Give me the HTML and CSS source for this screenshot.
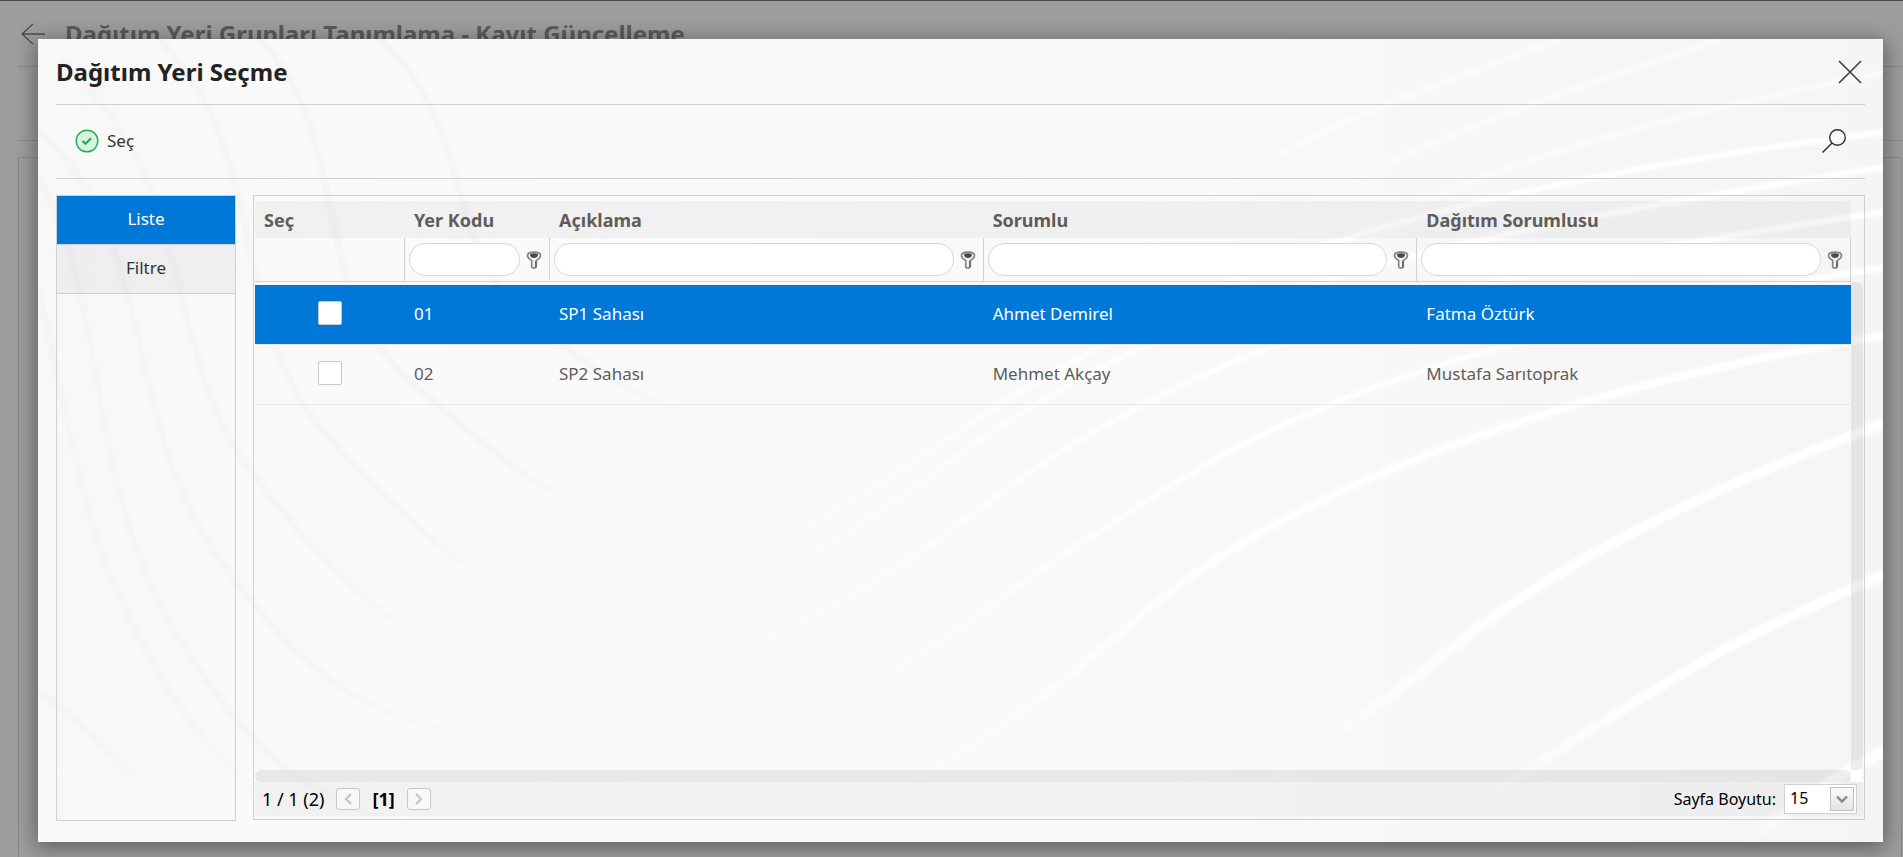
FILE: index.html
```html
<!DOCTYPE html>
<html lang="tr">
<head>
<meta charset="utf-8">
<title>Dağıtım Yeri Seçme</title>
<link rel="stylesheet" href="styles.css">
</head>
<body>
<svg class="defs" aria-hidden="true">
  <symbol id="pin" viewBox="0 0 16 18">
    <path d="M1.500 4.500C1.500 2 4 1.200 8 1.200s6.500.8 6.500 3.300c0 2.600-2.200 3.700-4.200 5v6q0 1.300-1.200 1.300H6.900q-1.200 0-1.200-1.300v-6C3.700 8.200 1.500 7.100 1.500 4.500z" fill="#f4f4f4" stroke="#858585" stroke-width="1.700"/>
    <path d="M4 3Q8 1.500 12 3q0 4-4 4T4 3z" fill="#4a4a4a"/>
    <path d="M9.800 10v6" stroke="#666" stroke-width="1.500"/>
  </symbol>
</svg>

<main class="page" inert>
  <header class="page-head">
    <svg class="back" viewBox="0 0 24 22"><path d="M12 1 1 11l11 10M1 11h23" fill="none" stroke="#4d4d4d" stroke-width="1.300"/></svg>
    <h1>Dağıtım Yeri Grupları Tanımlama - Kayıt Güncelleme</h1>
  </header>
  <div class="page-bar"></div>
  <div class="page-box"></div>
</main>

<section class="dialog" role="dialog" aria-labelledby="dlg-title">
  <svg class="waves" viewBox="38 39 1845 803" preserveAspectRatio="none" aria-hidden="true">
    <defs>
      <linearGradient id="base" x1="0" y1="0" x2="1" y2="0">
        <stop offset="0" stop-color="#f8f8f8"/><stop offset=".2" stop-color="#fafafa"/><stop offset=".6" stop-color="#f9f9f9"/><stop offset="1" stop-color="#f5f5f5"/>
      </linearGradient>
      <linearGradient id="light" x1="0" y1="0" x2="1" y2="0">
        <stop offset="0.100" stop-color="#fff" stop-opacity="0"/><stop offset=".5" stop-color="#fff"/><stop offset="1" stop-color="#fff"/>
      </linearGradient>
      <linearGradient id="shade" x1="0" y1="0" x2="1" y2="0">
        <stop offset="0" stop-color="#f4f4f4"/><stop offset=".5" stop-color="#f5f5f5"/><stop offset="1" stop-color="#f8f8f8" stop-opacity="0"/>
      </linearGradient>
      <filter id="soft"><feGaussianBlur stdDeviation="1.500"/></filter>
    </defs>
    <rect x="38" y="39" width="1845" height="803" fill="url(#base)"/>
    <g fill="none" stroke="url(#shade)" stroke-width="7" filter="url(#soft)">
      <path d="M38 290C70 420 80 520 130 620S220 770 330 850"/>
      <path d="M38 180C110 290 80 480 180 640S330 800 480 850"/>
      <path d="M38 130C160 240 120 420 220 560S400 740 560 740"/>
      <path d="M60 60C200 180 160 350 250 470S420 660 560 690"/>
      <path d="M160 39C280 170 220 330 340 450S480 600 620 590"/>
      <path d="M260 39C360 150 300 290 420 390S560 520 700 500"/>
      <path d="M380 39C480 130 440 260 540 330S680 430 790 420"/>
      <path d="M38 690C100 740 150 780 180 850"/>
    </g>
    <g fill="none" stroke="url(#light)" stroke-width="6" filter="url(#soft)">
      <path d="M560 600C820 560 900 460 1040 380S1330 200 1900 130"/>
      <path d="M560 640C830 590 900 480 1060 390S1400 240 1900 165"/>
      <path d="M540 697C850 650 930 530 1080 440S1400 280 1900 210"/>
      <path d="M631 776C870 720 960 620 1092 536S1350 350 1900 265"/>
      <path d="M700 860C960 790 1060 680 1160 600S1480 400 1900 333" stroke-width="8"/>
      <path d="M1165 842C1250 800 1400 690 1456 645S1640 510 1900 418" stroke-width="10"/>
      <path d="M1400 860C1480 800 1600 720 1723 650Q1810 605 1900 568" stroke-width="10"/>
      <path d="M1720 860Q1810 790 1900 742" stroke-width="12"/>
      <path d="M1100 300C1200 160 1400 100 1560 39" stroke-opacity=".5"/>
      <path d="M1180 300C1280 190 1480 120 1720 39" stroke-opacity=".5"/>
      <path d="M1200 340C1340 220 1520 140 1900 70" stroke-opacity=".5"/>
    </g>
  </svg>

  <header class="dialog-head">
    <h2 id="dlg-title">Dağıtım Yeri Seçme</h2>
    <button class="icon-btn" type="button" aria-label="Kapat">
      <svg width="24" height="24" viewBox="0 0 24 24"><path d="M1 1l22 22M23 1 1 23" stroke="#444" stroke-width="1.700"/></svg>
    </button>
  </header>

  <div class="toolbar">
    <button class="tool" type="button">
      <svg width="24" height="24" viewBox="0 0 24 24"><circle cx="12" cy="12" r="10.800" fill="#daf1df" stroke="#23ad57" stroke-width="1.400"/><path d="M7.500 12l3 2.800 5.500-5.500" fill="none" stroke="#23ad57" stroke-width="2.200"/></svg>
      <span>Seç</span>
    </button>
    <button class="icon-btn" type="button" aria-label="Ara">
      <svg width="24" height="24" viewBox="0 0 24 24"><circle cx="15.500" cy="8.500" r="7.800" fill="none" stroke="#333" stroke-width="1.400"/><path d="M10 14 .5 23.500" stroke="#333" stroke-width="1.500"/></svg>
    </button>
  </div>

  <div class="content">
    <nav class="tabs">
      <button class="tab active" type="button">Liste</button>
      <button class="tab" type="button">Filtre</button>
    </nav>

    <div class="grid">
      <div class="viewport">
        <table>
          <colgroup><col class="c-sel"><col class="c-code"><col><col><col></colgroup>
          <thead>
            <tr class="titles"><th>Seç</th><th>Yer Kodu</th><th>Açıklama</th><th>Sorumlu</th><th>Dağıtım Sorumlusu</th></tr>
            <tr class="filters">
              <td></td>
              <td><div class="filter"><input type="text" aria-label="Yer Kodu"><button type="button" aria-label="Yer Kodu filtresi"><svg width="16" height="18"><use href="#pin"/></svg></button></div></td>
              <td><div class="filter"><input type="text" aria-label="Açıklama"><button type="button" aria-label="Açıklama filtresi"><svg width="16" height="18"><use href="#pin"/></svg></button></div></td>
              <td><div class="filter"><input type="text" aria-label="Sorumlu"><button type="button" aria-label="Sorumlu filtresi"><svg width="16" height="18"><use href="#pin"/></svg></button></div></td>
              <td><div class="filter"><input type="text" aria-label="Dağıtım Sorumlusu"><button type="button" aria-label="Dağıtım Sorumlusu filtresi"><svg width="16" height="18"><use href="#pin"/></svg></button></div></td>
            </tr>
          </thead>
          <tbody>
            <tr class="gap"><td colspan="5"></td></tr>
            <tr class="selected"><td class="check"><input type="checkbox" aria-label="01 seç"></td><td>01</td><td>SP1 Sahası</td><td>Ahmet Demirel</td><td>Fatma Öztürk</td></tr>
            <tr><td class="check"><input type="checkbox" aria-label="02 seç"></td><td>02</td><td>SP2 Sahası</td><td>Mehmet Akçay</td><td>Mustafa Sarıtoprak</td></tr>
          </tbody>
        </table>
      </div>
      <div class="track-v"></div>
      <div class="track-h"></div>
      <div class="corner"></div>
      <footer class="pager">
        <span>1 / 1 (2)</span>
        <button class="step" type="button" aria-label="Önceki"><svg width="8" height="12" viewBox="0 0 8 12"><path d="M7 1 2 6l5 5" fill="none" stroke="#c4c4c4" stroke-width="2.200"/></svg></button>
        <b>[1]</b>
        <button class="step" type="button" aria-label="Sonraki"><svg width="8" height="12" viewBox="0 0 8 12"><path d="M1 1l5 5-5 5" fill="none" stroke="#c4c4c4" stroke-width="2.200"/></svg></button>
        <label class="size-label" for="size">Sayfa Boyutu:</label>
        <span class="size">
          <select id="size"><option>15</option><option>30</option></select>
          <span class="size-arrow"><svg width="12" height="9" viewBox="0 0 12 9"><path d="M1 1.500l5 5 5-5" fill="none" stroke="#888" stroke-width="2.400"/></svg></span>
        </span>
      </footer>
    </div>
  </div>
</section>
</body>
</html>
```

FILE: styles.css
```css
* { box-sizing: border-box; }

body {
  margin: 0;
  height: 100vh;
  overflow: hidden;
  font-family: "Noto Sans", "Open Sans", sans-serif;
  font-size: 17px;
  color: #333;
  background: #9d9d9d;
}

button, input, select { font: inherit; color: inherit; }
button { background: none; border: 0; padding: 0; cursor: pointer; }
svg { display: block; }
.defs { position: absolute; width: 0; height: 0; }

/* dimmed page behind the dialog */
.page {
  height: 100%;
  display: flex;
  flex-direction: column;
  padding: 0 1px 0 18px;
  border-top: 1px solid #4a4a4a;
}
.page-head {
  display: flex;
  align-items: center;
  gap: 20px;
  height: 66px;
  padding-left: 3px;
  border-bottom: 1px solid #898989;
}
.back { width: 24px; height: 22px; }
.page h1 { margin: 0; font-size: 24px; line-height: 32px; color: #5a5a5a; }
.page-bar { height: 74px; border-bottom: 1px solid #898989; }
.page-box { flex: 1; margin-top: 16px; border: 1px solid #898989; border-bottom: 0; }

.dialog {
  position: fixed;
  inset: 39px 20px 15px 38px;
  isolation: isolate;
  display: flex;
  flex-direction: column;
  padding: 0 18px 21px;
  background: #f9f9f9;
  box-shadow: 0 4px 20px 2px rgba(0, 0, 0, .4);
}
.waves { position: absolute; inset: 0; width: 100%; height: 100%; z-index: -1; }

.dialog-head, .toolbar {
  display: flex;
  justify-content: space-between;
  align-items: center;
  border-bottom: 1px solid #d0d0d0;
}
.dialog-head { height: 66px; padding-right: 3px; }
.dialog-head h2 { margin: 0; font-size: 24px; line-height: 32px; color: #222; }
.toolbar { height: 74px; padding: 0 19px 2px; }
.tool { display: flex; align-items: center; gap: 8px; line-height: 24px; }

.content { flex: 1; display: flex; gap: 17px; margin-top: 16px; min-height: 0; }

.tabs { width: 180px; border: 1px solid #d0d0d0; }
.tab {
  display: block;
  width: 100%;
  height: 49px;
  padding-bottom: 4px;
  border-bottom: 1px solid #d0d0d0;
  background: rgba(0, 0, 0, .04);
}
.tab.active { background: #0078d7; color: #fff; }

.grid {
  flex: 1;
  min-width: 0;
  display: grid;
  grid-template: 1fr 12px 34px / 1fr 12px;
  padding: 5px 1px 3px;
  border: 1px solid #d0d0d0;
  margin-bottom: 1px;
}
.viewport { overflow: hidden; }

table { width: 100%; table-layout: fixed; border-collapse: separate; border-spacing: 0; color: #5e5d59; }
.c-sel { width: 150px; }
.c-code { width: 145px; }
th, td { padding: 0; text-align: left; }
.titles th { height: 37px; padding: 0 9px; font-size: 18px; line-height: 24px; background: rgba(0, 0, 0, .035); }
.filters td { height: 44px; padding: 0 4px; border-right: 1px solid #d0d0d0; border-bottom: 1px solid #d0d0d0; }
.filter { display: flex; align-items: center; gap: 6px; padding-right: 3px; }
.filter input {
  flex: 1;
  min-width: 0;
  height: 33px;
  padding: 0 12px;
  border: 1px solid #d8d8d8;
  border-radius: 16px;
  background: #fff;
}
.gap td { height: 3px; }
tbody tr:not(.gap) td { height: 60px; padding: 0 9px 3px; border-bottom: 1px solid #e8e8e8; }
tbody .selected td { background: #0078d7; color: #fff; border-bottom-color: #0078d7; }
.check input {
  appearance: none;
  display: block;
  width: 24px;
  height: 24px;
  margin: 0 auto;
  border: 1px solid #c8c8c8;
  border-radius: 2px;
  background: #fff;
}

.track-v { margin-top: 81px; background: rgba(0, 0, 0, .065); border-radius: 0 6px 6px 0; }
.track-h { background: rgba(0, 0, 0, .065); border-radius: 6px; }
.corner { background: #fff; }

.pager {
  grid-column: 1 / -1;
  display: flex;
  align-items: center;
  gap: 12px;
  padding: 0 6px 0 7px;
  background: rgba(0, 0, 0, .03);
  color: #000;
  font-size: 18px;
  line-height: 24px;
}
.step {
  display: grid;
  place-items: center;
  width: 24px;
  height: 22px;
  border: 1px solid #c8c8c8;
  border-radius: 3px;
  background: #f8f8f8;
}
.size-label { margin-left: auto; font-size: 16px; }
.size { position: relative; width: 73px; margin-left: -4px; }
.size select {
  appearance: none;
  display: block;
  width: 100%;
  height: 30px;
  padding: 0 5px 3px;
  border: 1px solid #d0d0d0;
  border-radius: 0;
  background: #fff;
  font-size: 16px;
}
.size-arrow {
  position: absolute;
  top: 3px;
  right: 3px;
  display: grid;
  place-items: center;
  width: 24px;
  height: 24px;
  border: 1px solid #c0c0c0;
  background: linear-gradient(#fafafa, #e4e4e4);
  pointer-events: none;
}
```
